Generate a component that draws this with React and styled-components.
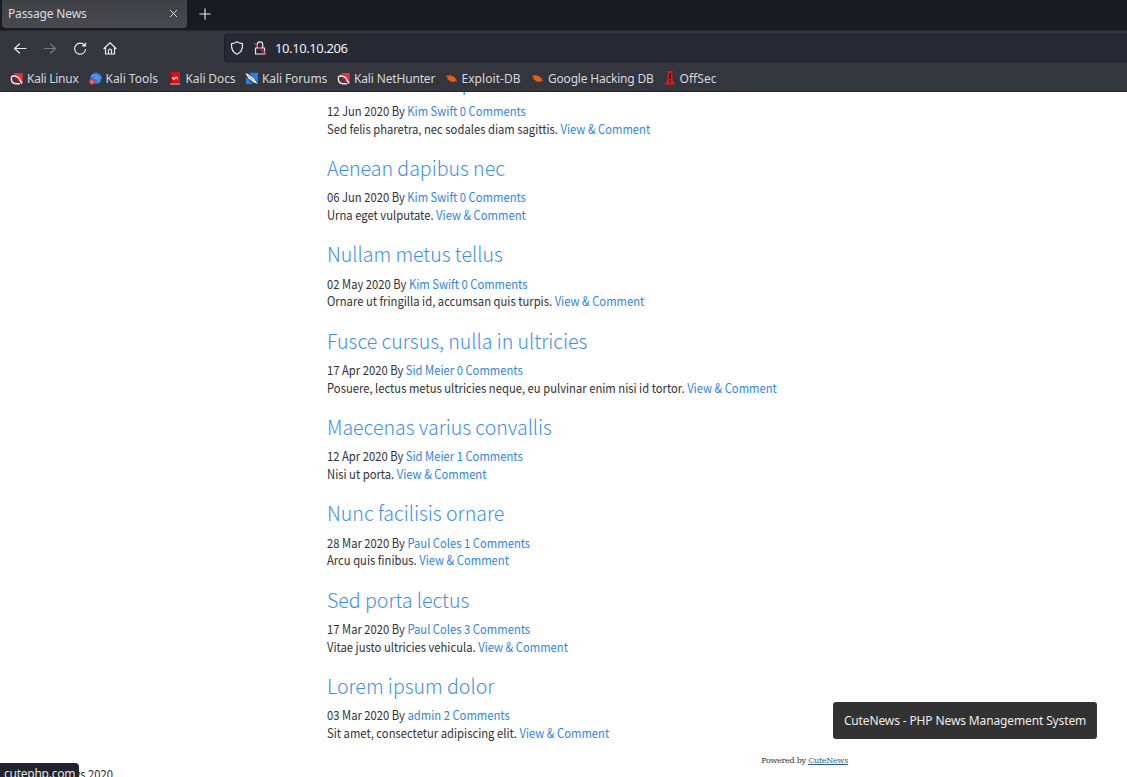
import React from "react";
import styled, { createGlobalStyle } from "styled-components";

const Global = createGlobalStyle`
  * { box-sizing: border-box; }
  body { margin: 0; background: #fff; overflow: hidden; }
`;

const ui = `"Noto Sans", sans-serif`;
const prose = `"Noto Sans CJK SC", sans-serif`;

const Window = styled.div`
  position: relative;
  height: 777px;
  display: flex;
  flex-direction: column;
  overflow: hidden;
  font-family: ${ui};
`;

const TabStrip = styled.div`
  flex: none;
  height: 31px;
  display: flex;
  align-items: flex-start;
  padding-left: 2px;
  background: #1a1b20;
  border-bottom: 1px solid #25272c;
`;

const Tab = styled.div`
  width: 185px;
  height: 28px;
  padding: 0 9px 1px 6px;
  display: flex;
  align-items: center;
  justify-content: space-between;
  border-radius: 0 0 4px 4px;
  background: linear-gradient(#3e4044, #474a50);
  color: #dcdde0;
  font-size: 12px;
  letter-spacing: -0.15px;
`;

const NewTab = styled.div`
  height: 27px;
  margin-left: 12px;
  display: flex;
  align-items: center;
`;

const NavBar = styled.div`
  flex: none;
  height: 34px;
  display: flex;
  align-items: center;
  padding-left: 13px;
  background: #34363d;
`;

const NavButtons = styled.div`
  width: 211px;
  display: flex;
  gap: 16px;
`;

const AddressBar = styled.div`
  flex: 1;
  height: 28px;
  display: flex;
  align-items: center;
  gap: 9px;
  padding-left: 5px;
  border: 1px solid #1d1f27;
  border-right: 0;
  border-radius: 3px 0 0 3px;
  background: #272933;
  color: #f1f1f3;
  font-size: 13px;
`;

const Address = styled.span`
  margin-left: -1px;
  letter-spacing: -0.4px;
`;

const Bookmarks = styled.div`
  flex: none;
  height: 27px;
  display: flex;
  align-items: center;
  padding-left: 10px;
  background: #34363d;
  border-bottom: 1px solid #24262b;
`;

const Bookmark = styled.div`
  flex: none;
  width: ${(p) => p.$w}px;
  display: flex;
  align-items: center;
  gap: 4px;
  color: #d6d7da;
  font-size: 12px;
  letter-spacing: ${(p) => p.$spacing}px;
  white-space: nowrap;
`;

const Page = styled.main`
  flex: 1;
  min-height: 0;
  overflow: hidden;
  background: #fff;
  color: #333;
  font-family: ${prose};
`;

const Posts = styled.div`
  width: 521px;
  margin: -27.3px 0 0 327px;
`;

const Post = styled.article`
  height: 86.33px;
  font-size: 12.5px;
  line-height: 17.6px;
  white-space: nowrap;
`;

const Title = styled.h2`
  margin: 0 0 5.4px;
  color: #3d8fe6;
  font-size: 20.5px;
  font-weight: 300;
  line-height: 32px;
  transform: scaleX(0.953);
  transform-origin: left;
`;

const TextLine = styled.div`
  transform: scaleX(0.8995);
  transform-origin: left;
`;

const Link = styled.a`
  color: #2f86e4;
`;

const Powered = styled.div`
  margin-top: -0.3px;
  text-align: right;
  color: #333;
  font: 8px/12px "DejaVu Serif", serif;
  letter-spacing: -0.26px;
  a { color: #2a5a90; text-decoration: underline; }
`;

const Footer = styled.footer`
  width: 113px;
  margin-top: -2px;
  display: flex;
  justify-content: flex-end;
  white-space: nowrap;
  font-size: 12.5px;
  line-height: 18px;
  transform: scaleX(0.901);
  transform-origin: right;
`;

const Status = styled.div`
  position: absolute;
  left: 0;
  bottom: 0;
  width: 79px;
  height: 14px;
  padding-left: 4px;
  overflow: hidden;
  border-radius: 0 4px 0 0;
  background: #22242d;
  color: #e2e3e6;
  font-size: 12px;
  letter-spacing: -0.25px;
  line-height: 21px;
`;

const Tooltip = styled.div`
  position: absolute;
  left: 833px;
  top: 702px;
  width: 264px;
  height: 37px;
  padding-bottom: 1px;
  display: flex;
  align-items: center;
  justify-content: center;
  border-radius: 3px;
  background: #323232;
  color: #ececec;
  font-size: 12px;
  letter-spacing: -0.13px;
  white-space: nowrap;
`;

const Line = ({ size = 14, color = "#e6e7ea", w = 1.2, children }) => (
  <svg width={size} height={size} viewBox="0 0 14 14" fill="none" stroke={color} strokeWidth={w} strokeLinecap="round" strokeLinejoin="round">
    {children}
  </svg>
);

const Dragon = () => (
  <svg width="13" height="13" viewBox="0 0 13 13">
    <path d="M3.500 1H12.800V11L8 5Z" fill="#ee2f3a" />
    <path d="M1 5.500C3 3 7 3.500 9 6.500L12 11.500" fill="none" stroke="#efebed" strokeWidth="1.600" />
    <path d="M1.500 6C.8 9 2.500 11.700 6 11.700H10" fill="none" stroke="#efebed" strokeWidth="1.500" />
    <path d="M3 8C4 10.500 7 10.800 8.300 8.800C8.300 6.500 5.500 5.800 4.500 7.300" fill="none" stroke="#c71935" strokeWidth="1.500" />
  </svg>
);
const Tools = () => (
  <svg width="13" height="13" viewBox="0 0 13 13">
    <circle cx="7" cy="6.300" r="5.700" fill="#287be8" />
    <path d="M2 4.500C5 2.700 8 3.500 12 6.500M5 6C8 5.500 9.500 7 10 10" fill="none" stroke="#9bc8ff" strokeWidth=".8" />
    <circle cx="3" cy="9.800" r="3" fill="#e32f3b" />
    <path d="M1.500 9.800H4.700M3 8.200V11.500" stroke="#ffb3b7" strokeWidth=".7" />
  </svg>
);
const Docs = () => (
  <svg width="13" height="13" viewBox="0 0 13 13">
    <path d="M1 0H11V12.500H1Z" fill="#dc1115" />
    <path d="M1 0H2.500V12H1Z" fill="#8c1014" />
    <path d="M1 11.600H11V12.500H1Z" fill="#c8c4c4" />
    <path d="M3.800 5C3.500 7.800 5.700 7.800 6 6.300C6.300 4.700 8.800 4.700 8.500 7.500" fill="none" stroke="#fff" strokeWidth="1.200" />
  </svg>
);
const Forums = () => (
  <svg width="13" height="13" viewBox="0 0 13 13">
    <path d="M1 .8H13V12H1Z" fill="#1f80f1" />
    <path d="M0 0H3.500L13 11V13H9L0 4Z" fill="#34363d" />
    <path d="M.3 1L3 2L8.500 6L12.800 12L8 10L3.500 6.500Z" fill="#f1f5fa" />
    <path d="M3 3.500L8.500 8.800" stroke="#5c6470" strokeWidth=".6" />
  </svg>
);
const Bug = () => (
  <svg width="13" height="13" viewBox="0 0 13 13">
    <path d="M1 3.500L4 3.800L5 2.500L6 4L8.500 4L9 5.500L11.500 6.500L10.500 7.500L12.500 9.500L9.500 9L9 10.500L7.500 9.500L4.500 9.500L4.500 8L2 7.500L3 6.500Z" fill="#e8600f" />
  </svg>
);
const OffSec = () => (
  <svg width="12" height="14" viewBox="0 0 12 14">
    <path d="M2.500 0H9.500L8 2.500L9 10L11.500 13.500H.5L3 10L4 2.500Z" fill="#d8181d" />
    <path d="M5.200 2H6.800V8H5.200Z" fill="#34161b" />
    <path d="M4.500 10L6 9L7.500 10L6 12Z" fill="#7c1015" />
  </svg>
);

const bookmarks = [
  { name: "Kali Linux", Icon: Dragon, width: 78.5, spacing: -0.25 },
  { name: "Kali Tools", Icon: Tools, width: 80, spacing: -0.02 },
  { name: "Kali Docs", Icon: Docs, width: 76.5, spacing: -0.12 },
  { name: "Kali Forums", Icon: Forums, width: 92, spacing: -0.1 },
  { name: "Kali NetHunter", Icon: Dragon, width: 107.5, spacing: -0.16 },
  { name: "Exploit-DB", Icon: Bug, width: 86.5, spacing: 0.05 },
  { name: "Google Hacking DB", Icon: Bug, width: 132.5, spacing: -0.2 },
  { name: "OffSec", Icon: OffSec, width: 60, spacing: 0.05 },
];

const posts = [
  ["Phasellus tristique urna", "12 Jun 2020", "Kim Swift", 0, "Sed felis pharetra, nec sodales diam sagittis."],
  ["Aenean dapibus nec", "06 Jun 2020", "Kim Swift", 0, "Urna eget vulputate."],
  ["Nullam metus tellus", "02 May 2020", "Kim Swift", 0, "Ornare ut fringilla id, accumsan quis turpis."],
  ["Fusce cursus, nulla in ultricies", "17 Apr 2020", "Sid Meier", 0, "Posuere, lectus metus ultricies neque, eu pulvinar enim nisi id tortor."],
  ["Maecenas varius convallis", "12 Apr 2020", "Sid Meier", 1, "Nisi ut porta."],
  ["Nunc facilisis ornare", "28 Mar 2020", "Paul Coles", 1, "Arcu quis finibus."],
  ["Sed porta lectus", "17 Mar 2020", "Paul Coles", 3, "Vitae justo ultricies vehicula."],
  ["Lorem ipsum dolor", "03 Mar 2020", "admin", 2, "Sit amet, consectetur adipiscing elit."],
];

export default function App() {
  return (
    <Window>
      <Global />
      <TabStrip>
        <Tab>
          Passage News
          <Line size={9} w={1.4}><path d="M2 2L12 12M12 2L2 12" /></Line>
        </Tab>
        <NewTab><Line size={12} w={1.3}><path d="M7 1V13M1 7H13" /></Line></NewTab>
      </TabStrip>
      <NavBar>
        <NavButtons>
          <Line><path d="M13 7.500H1.500M6.500 3L1.500 7.500L6.500 12" /></Line>
          <Line color="#777980"><path d="M1 7.500H12.500M7.500 3L12.500 7.500L7.500 12" /></Line>
          <Line><path d="M12.600 8.500A5.500 5.500 0 1 1 11.500 4.300" /><path d="M12.800 1.800V5.300H9.300Z" fill="#e6e7ea" strokeWidth=".5" /></Line>
          <Line><path d="M1 7.500L7 1.800L13 7.500M2.500 6.500V13H11.500V6.500M5.500 13V9.500A1.500 1.500 0 0 1 8.500 9.500V13" /></Line>
        </NavButtons>
        <AddressBar>
          <Line><path d="M7 .8C8.500 2 10.500 2.500 12.500 2.700C12.800 7.500 11 11.500 7 13.300C3 11.500 1.200 7.500 1.500 2.700C3.500 2.500 5.500 2 7 .8Z" /></Line>
          <Line>
            <path d="M4.300 6.500V3.500A2.700 2.700 0 0 1 9.700 3.500V6.500M2.500 7H11.500V13H2.500Z" />
            <path d="M1.500 2.500L13 12.800" stroke="#e0254d" />
          </Line>
          <Address>10.10.10.206</Address>
        </AddressBar>
      </NavBar>
      <Bookmarks>
        {bookmarks.map(({ name, Icon, width, spacing }) => (
          <Bookmark key={name} $w={width} $spacing={spacing}><Icon />{name}</Bookmark>
        ))}
      </Bookmarks>
      <Page>
        <Posts>
          {posts.map(([title, date, author, n, text]) => (
            <Post key={title}>
              <Title>{title}</Title>
              <TextLine>{date} By <Link>{author}</Link> <Link>{n} Comments</Link></TextLine>
              <TextLine>{text} <Link>View &amp; Comment</Link></TextLine>
            </Post>
          ))}
          <Powered>Powered by <a>CuteNews</a></Powered>
        </Posts>
        <Footer>© Passage News 2020</Footer>
      </Page>
      <Status>cutephp.com</Status>
      <Tooltip>CuteNews - PHP News Management System</Tooltip>
    </Window>
  );
}
